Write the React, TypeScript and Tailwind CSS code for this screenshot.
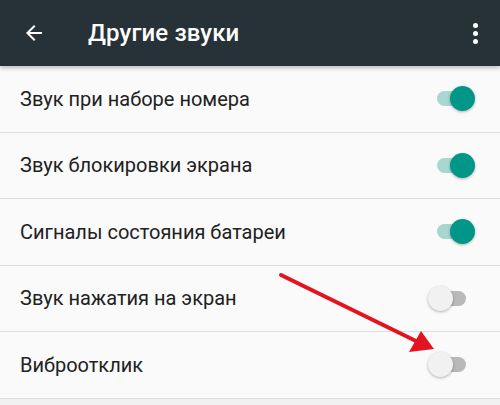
import React from 'react';

const rows = [
  { label: 'Звук при наборе номера', on: true },
  { label: 'Звук блокировки экрана', on: true },
  { label: 'Сигналы состояния батареи', on: true },
  { label: 'Звук нажатия на экран', on: false },
  { label: 'Виброотклик', on: false },
];

function Toggle({ on }: { on: boolean }) {
  return (
    <div className="relative w-[47px] h-[25px] flex items-center">
      <div className={`absolute left-[9px] w-[29px] h-[15px] rounded-full ${on ? 'bg-[#a7d7d0]' : 'bg-[#b9b9b9]'}`} />
      {on ? (
        <div className="absolute right-0 w-[25px] h-[25px] rounded-full bg-[#009788] shadow-[0_1px_3px_rgba(0,0,0,0.3)]" />
      ) : (
        <div className="absolute left-0 w-[25px] h-[25px] rounded-full bg-[#f1f1f1] shadow-[0_1px_3px_rgba(0,0,0,0.3)]" />
      )}
    </div>
  );
}

export default function App() {
  return (
    <div className="relative w-[500px] h-[405px] overflow-hidden bg-[#f0f0f0] font-['Roboto',sans-serif]">
      {/* Toolbar */}
      <div className="relative z-10 h-[66px] bg-[#263238] flex items-center shadow-[0_2px_4px_rgba(0,0,0,0.25)]">
        <svg className="ml-[22px]" width="24" height="24" viewBox="0 0 24 24">
          <path d="M20 11H7.83l5.59-5.59L12 4l-8 8 8 8 1.41-1.41L7.83 13H20v-2z" fill="#fff" />
        </svg>
        <h1 className="ml-[42px] text-[24px] font-medium text-white tracking-[0.1px]">Другие звуки</h1>
        <div className="ml-auto mr-[22px] flex flex-col items-center gap-[3px]">
          <span className="w-[5px] h-[5px] rounded-full bg-white" />
          <span className="w-[5px] h-[5px] rounded-full bg-white" />
          <span className="w-[5px] h-[5px] rounded-full bg-white" />
        </div>
      </div>

      {/* Rows */}
      <div className="bg-[#fafafa]">
        {rows.map((row) => (
          <div key={row.label} className="h-[66.5px] flex items-center justify-between pl-[20px] pr-[25px] border-b border-[#dedede]">
            <span className="text-[20px] text-[#212121]">{row.label}</span>
            <Toggle on={row.on} />
          </div>
        ))}
      </div>

      {/* Red annotation arrow */}
      <svg className="absolute left-0 top-0 z-20" width="500" height="405" viewBox="0 0 500 405">
        <line x1="281" y1="275" x2="418" y2="342" stroke="#e3141f" strokeWidth="4" strokeLinecap="round" />
        <polygon points="434,349 409,352 421,331" fill="#e3141f" />
      </svg>
    </div>
  );
}
